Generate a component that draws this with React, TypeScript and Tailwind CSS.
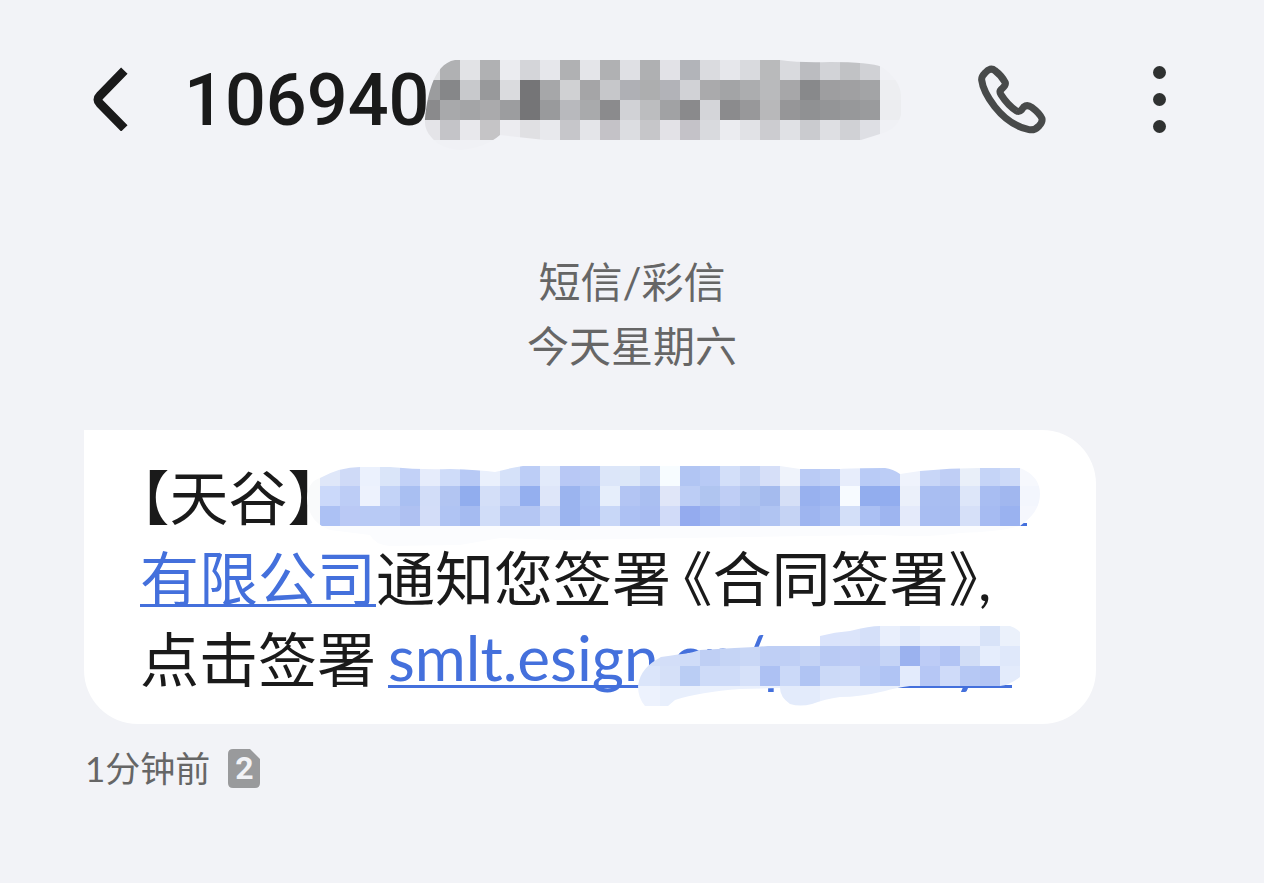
import React from "react";

type MosaicProps = {
  id: string;
  clip: string;
  x: number;
  y: number;
  columns: number;
  rows: string[];
  className: string;
};

const CELL = 20;

function Mosaic({ id, clip, x, y, columns, rows, className }: MosaicProps) {
  return (
    <svg
      aria-hidden="true"
      className={className}
      width={columns * CELL}
      height={rows.length * CELL}
      viewBox={`${x} ${y} ${columns * CELL} ${rows.length * CELL}`}
      shapeRendering="crispEdges"
    >
      <defs>
        <clipPath id={id}>
          <path d={clip} shapeRendering="auto" />
        </clipPath>
      </defs>
      <g clipPath={`url(#${id})`}>
        {rows.map((row, r) => {
          const colors = row.split(" ");
          return Array.from({ length: columns }, (_, c) => (
            <rect
              key={`${r}-${c}`}
              x={x + c * CELL}
              y={y + r * CELL}
              width={CELL}
              height={CELL}
              fill={`#${colors[Math.min(c, colors.length - 1)]}`}
            />
          ));
        })}
      </g>
    </svg>
  );
}

const numberRows = [
  "e2e3e6 b0b1b3 e2e3e6 b0b1b3 ebecf0 d4d5d9 e6e7eb b0b1b3 e4e5e9 b0b1b3 dfe0e4 afb0b2 e2e2e7 b2b4b9 dadbdf e6e7eb d9dade b9babb d9dade bbbcc0 d2d3d7 c1c2c5 d0d1d5 f0f1f5",
  "9b9c9e 868789 c8c9cc 98999b dadbde 757577 a6a7a9 d0d1d3 a5a5a7 c6c7ca afb0b5 adaeaf b2b3b8 d1d2d6 aaaaac a3a4a6 acadaf b9babc a7a7a9 88898b 9e9ea0 a0a0a2 a3a4a6 edeef1",
  "8a8a8c a8a9ab a4a5a7 aaaaac 9c9d9f 757577 999a9c b8b9bd a9aaac 8b8b8d d1d2d6 bcbdbf a1a2a4 8a8a8c d4d5d9 8b8b8d 98989a b8b8ba 969698 909193 949597 97989a 9a9b9d ecedf0",
  "e4e4e8 c4c4c8 e8e8ec c5c4c6 ececf0 e0e0e3 e8e9ed c6c6ca e4e5e9 c4c2c7 dcdde1 c6c6c9 e3e2e7 c4c2c8 d9dade ebecf0 e1e2e6 ccccd0 e0e1e5 cacbcf dedfe3 d0d1d5 dedfe4 f0f1f5",
  "f0f1f5",
];

const companyRows = [
  "f9fafb dfe7f9 cfdaf7 ebf1fd dae5f9 c2d1f7 e6ecfb cfdcf9 b7c9f5 eaf0fc d5e1f9 bccdf6 e2eafa b8c8f5 b9caf5 dce6f9 dce7f8 c9d8f7 f7fcff b1c5f3 b8caf5 d3dff9 c4d3f5 d6dff8 eff3fb bacbf5 c0d0f6 e7edfb b9cbf6 bccdf6 eff3fc c8d6f7 bfcef5 e9eff9 c5d4f7 cddaf8 f6f8fd",
  "f9fafb cbd9fa bdcdf6 edf2fd c3d3f7 a9bff2 d2ddf8 b2c5f2 91adee d4dff8 c2d2f7 94afef dee6f9 9bb4ef abc1f3 e6eefb b3c5f3 aabff1 e0e6f8 bccdf5 b0c5f0 bfcef5 afc4f0 a5bbee d5dff6 98b1ef 9db5f0 f7fbff 92adee 92adef ebf0fa a9bef2 a8bdf1 dde6f9 a8bdf2 a1b7ef f3f6fd",
  "f9fafb acc1f4 bac9f5 b8caf5 b8caf5 afc1f2 d3ddf8 b0c4f3 a5bbf1 d1ddf8 b3c6f3 b4c6f3 cbd8f7 9bb4ef aabff3 c8d7f7 adc1f3 a9bdf2 d1dbf8 94abef 9db4f0 aec1f2 aabff0 b0c4f2 c5d3f4 9eb5f0 a5bbf1 d3dff8 abc0f3 9eb5f0 e4eafa a8bdf2 a7bcf1 d6e0f8 a6bbf2 9ab2f0 f5f7fd",
  "fbfcfe",
  "fbfcfe",
];

const urlRows = [
  "d5e0f8 d5e0f8 d5e0f8 d5e0f8 d5e0f8 d5e0f8 d5e0f8 d5e0f8 d5e0f8 d5e0f8 dae3fb dbe4fa d5e0f9 e9effc dfe8fa e9effc e9effc eaf0fc d8e3f8 ebf1fb",
  "d5e0f8 d5e0f8 d3def8 cfdcf8 bfcff4 c5d4f5 c9d7f6 bfcff5 bfcff5 c4d3f5 b9caf4 bccbf5 bacaf4 c5d4f6 9bb2ef bdccf6 b2c4f4 d1ddf6 e5edfc dfe8fa",
  "dbe5fa dbe5fa d5e0f8 bacdf4 cedbf8 cedbf8 d6e1f9 adc1f3 cbd9f8 b0c4f3 cbd9f7 cddaf8 b8caf5 b0c4f4 e3ebfc b6c7f5 cfdbf9 b6c8f4 b3c5f4 e3ebfb",
  "edf2fd edf2fd e8effc e8effc ebf1fd ebf1fd ebf1fd edf2fd e3ebfb e3ebfb eaf0fc",
];

const numberClip =
  "M425 119C427 100 432 64 455 60L780 60Q800 63 830 62Q870 62 882 67Q900 80 901 95L901 115Q897 130 880 134L861 140L545 140L500 135Q485 148 460 150Q440 148 432 138Q424 130 425 119Z";
const companyClip =
  "M307 498C308 485 313 480 320 478Q340 467 360 467L390 467Q420 470 450 469Q480 470 495 472Q510 468 523 466L780 466L800 469L840 469Q850 468 885 468Q893 469 900 474L920 471Q950 468 980 468L1020 468Q1040 476 1040 494Q1040 510 1025 522L1020 526Q1000 532 960 533Q930 538 880 535L560 540L500 538L460 545L390 546Q375 545 370 535L330 530Q308 522 307 498Z";
const urlClip =
  "M638 686C640 672 648 664 661 657Q680 654 690 653L700 650Q740 648 768 646L820 646L820 636Q835 632 850 631Q870 626 880 626L1010 626Q1016 628 1020 632L1020 677Q1010 685 1000 686L910 686Q895 688 885 691Q860 697 840 697Q825 699 812 704Q800 707 790 704Q780 697 780 688L740 689Q700 692 675 700L668 706L645 706Q638 698 638 686Z";

export default function App() {
  return (
    <div className="min-h-screen bg-[#f2f3f7] font-['Lato','Noto_Sans_CJK_SC',sans-serif] text-[#1a1a1a]">
      <header className="flex h-[198px] items-center pr-[98px] pl-[93px]">
        <button type="button" aria-label="返回" className="shrink-0">
          <svg width="36" height="64" viewBox="69 51 108 192" fill="none" stroke="#1a1a1a" strokeWidth="27">
            <path d="M163 62L90 137Q78 149 90 161L163 235" />
          </svg>
        </button>
        <div className="relative ml-[55px] flex-1 pt-[4px]">
          <h1 className="font-['Roboto',sans-serif] text-[72px] leading-[100px] font-medium">106940</h1>
          <Mosaic
            id="number-mask"
            clip={numberClip}
            x={420}
            y={60}
            columns={25}
            rows={numberRows}
            className="absolute top-[13px] left-[236px]"
          />
        </div>
        <button type="button" aria-label="拨打电话" className="shrink-0">
          <svg width="71" height="71" viewBox="52 40 213 213" fill="none" stroke="#484a4a" strokeWidth="21" strokeLinejoin="round">
            <path d="M66 88Q65 78 76 67Q92 48 106 60Q126 75 137 96Q139 103 128 113Q117 121 124 132Q145 165 171 181Q178 185 186 177L192 169Q203 160 216 170Q240 188 247 204Q249 215 238 226Q225 240 208 237Q150 225 105 168Q70 122 66 88Z" />
          </svg>
        </button>
        <button type="button" aria-label="更多" className="ml-[105px] flex shrink-0 flex-col gap-[14px]">
          <span className="size-[13px] rounded-full bg-[#2f3131]" />
          <span className="size-[13px] rounded-full bg-[#2f3131]" />
          <span className="size-[13px] rounded-full bg-[#2f3131]" />
        </button>
      </header>

      <main>
        <div className="pt-[52px] text-center text-[42px] leading-[64px] text-[#666666]">
          <p>短信/彩信</p>
          <p>今天星期六</p>
        </div>

        <section className="relative mt-[52px] mr-[168px] ml-[84px] rounded-[54px] rounded-tl-none bg-white px-[56px] pt-[27px] pb-[24px] text-[59px] leading-[81px] whitespace-nowrap">
          <div className="flex h-[81px] items-start">
            <span className="[font-feature-settings:'halt']">【天谷】</span>
            <span className="ml-[24px] h-[69px] w-[686px] border-b-[3px] border-[#4470dc]" />
          </div>
          <div className="flex h-[81px] items-start">
            <a href="#company" className="h-[69px] border-b-[3px] border-[#4470dc] text-[#4470dc]">
              有限公司
            </a>
            <span>通知您签署</span>
            <span className="ml-[12px] [font-feature-settings:'halt']">《合同签署》,</span>
          </div>
          <div className="flex h-[81px] items-start">
            <span>点击签署</span>
            <a
              href="#sign"
              className="ml-[12px] flex h-[69px] w-[624px] border-b-[3px] border-[#4470dc] text-[62px] leading-[76px] text-[#4470dc]"
            >
              <span>smlt.esign.cn/p</span>
              <span className="ml-auto pr-[27px]">y</span>
            </a>
          </div>
          <Mosaic
            id="company-mask"
            clip={companyClip}
            x={300}
            y={466}
            columns={37}
            rows={companyRows}
            className="absolute top-[36px] left-[216px]"
          />
          <Mosaic
            id="url-mask"
            clip={urlClip}
            x={620}
            y={626}
            columns={20}
            rows={urlRows}
            className="absolute top-[196px] left-[536px]"
          />
        </section>

        <footer className="mt-[20px] flex items-center pl-[85px] text-[#666666]">
          <span className="text-[35px] leading-[48px]">1分钟前</span>
          <span className="relative ml-[18px] h-[39px] w-[32px]">
            <svg width="32" height="39" viewBox="0 0 32 39" fill="#999a9c" aria-hidden="true">
              <path d="M5 0H22L32 10V34Q32 39 27 39H5Q0 39 0 34V5Q0 0 5 0Z" />
            </svg>
            <span className="absolute inset-0 text-center font-['Roboto',sans-serif] text-[32px] leading-[39px] font-bold text-[#f2f3f7]">
              2
            </span>
          </span>
        </footer>
      </main>
    </div>
  );
}
